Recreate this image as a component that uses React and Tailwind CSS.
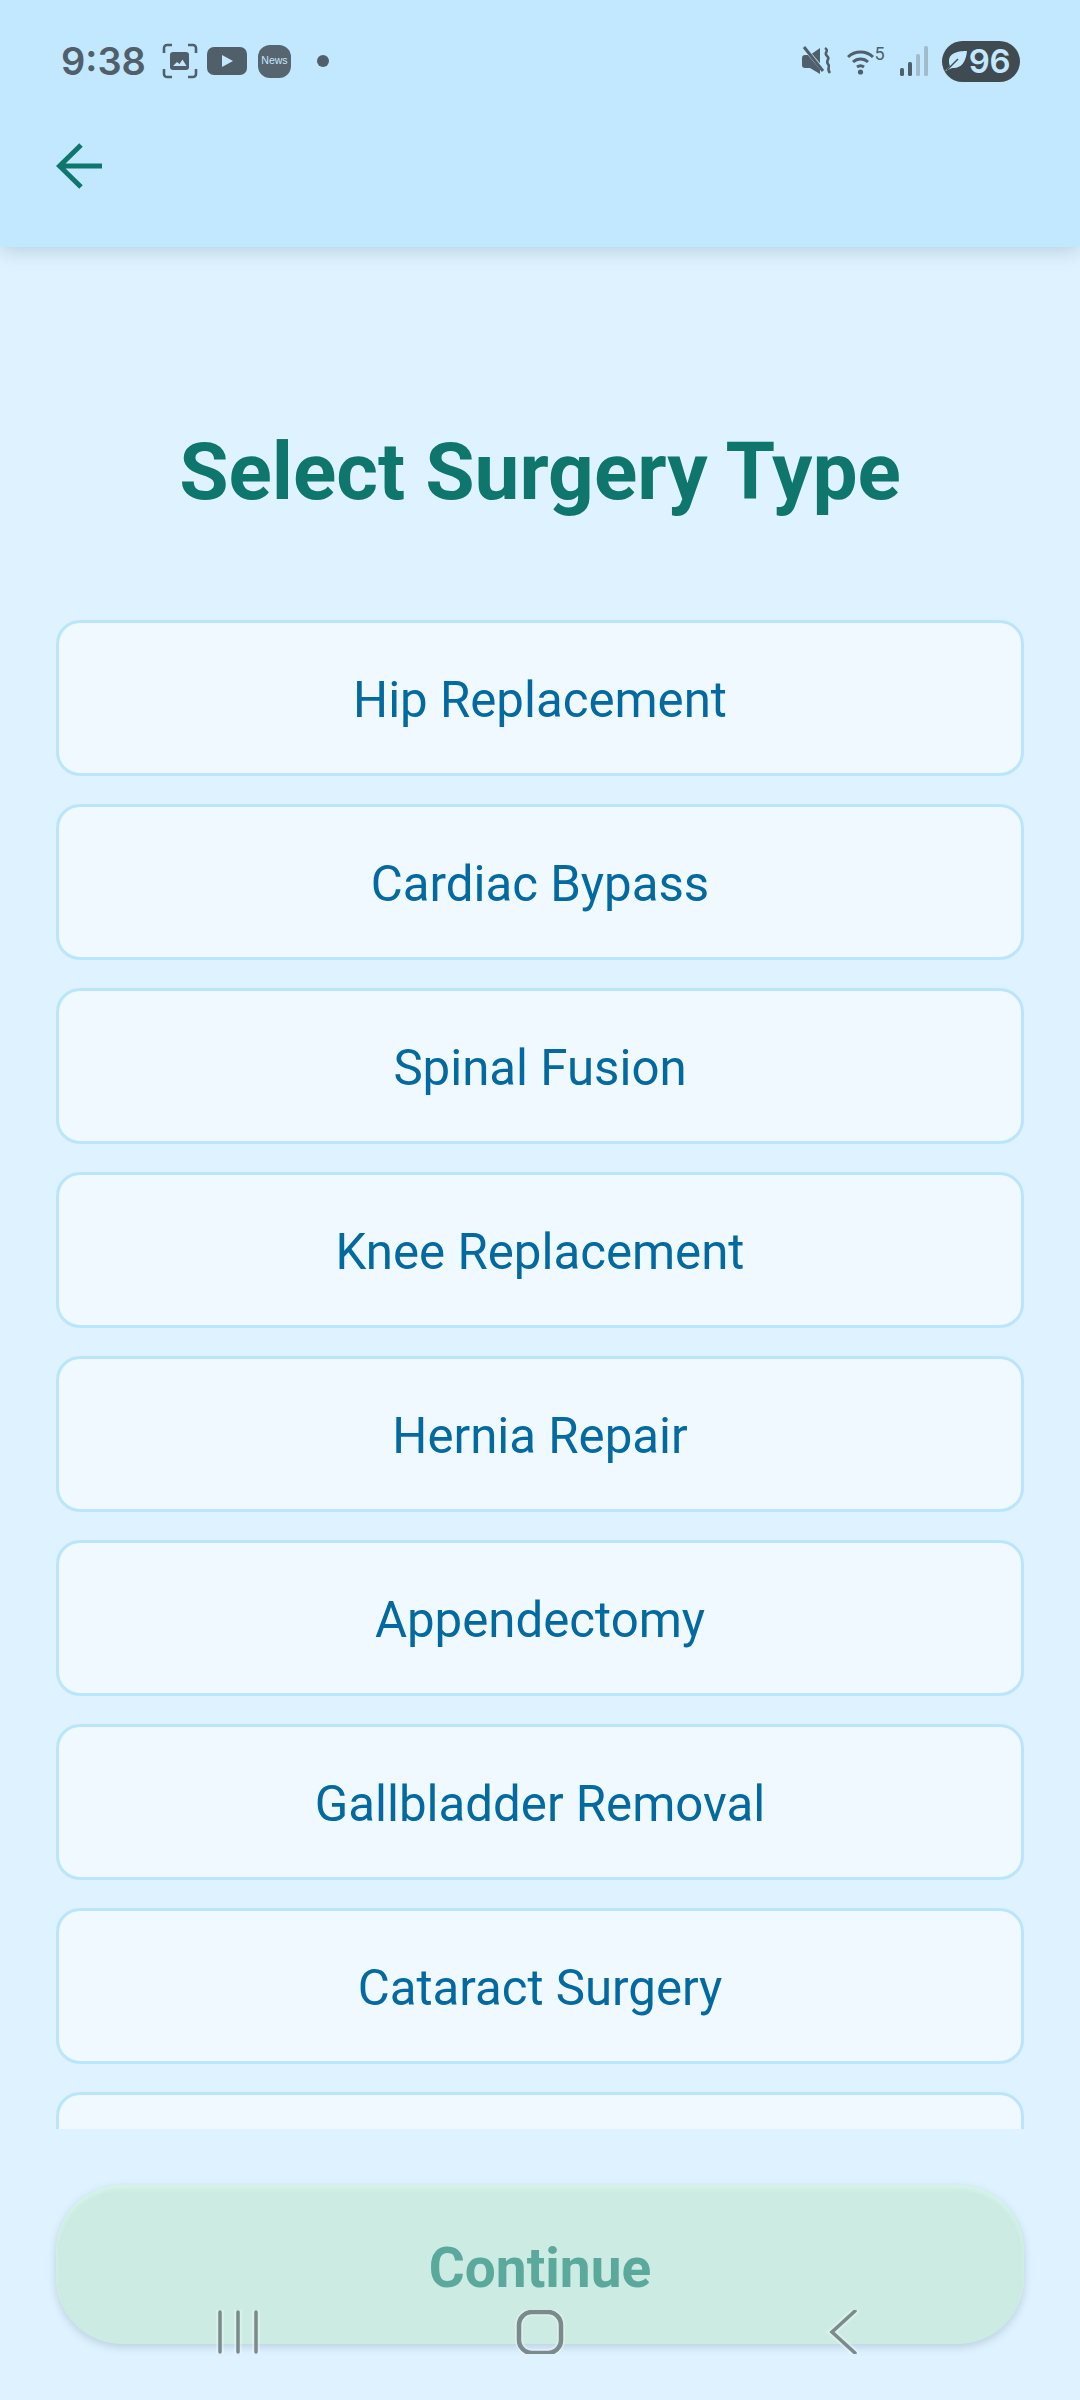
import React from 'react';

const surgeries = [
  'Hip Replacement',
  'Cardiac Bypass',
  'Spinal Fusion',
  'Knee Replacement',
  'Hernia Repair',
  'Appendectomy',
  'Gallbladder Removal',
  'Cataract Surgery',
  '',
];

const StatusLeft = () => (
  <div className="flex items-center">
    <span className="text-[38px] leading-none font-semibold text-[#505f69] w-[101px] font-['Inter',sans-serif]">9:38</span>
    <svg width="36" height="36" viewBox="0 0 36 36" fill="none">
      <path d="M10 2H5a3 3 0 0 0-3 3v5M26 2h5a3 3 0 0 1 3 3v5M10 34H5a3 3 0 0 1-3-3v-5M26 34h5a3 3 0 0 0 3-3v-5" stroke="#505f69" strokeWidth="2.6" />
      <rect x="8" y="9" width="19" height="18" rx="3" fill="#505f69" />
      <path d="M11 23l4-4 2.5 2 3-4.5 4 6.5z" fill="#c2e8ff" />
    </svg>
    <svg width="40" height="28" viewBox="0 0 40 28" className="ml-[9px]">
      <rect width="40" height="28" rx="7" fill="#505f69" />
      <path d="M15 8L26 14 15 20z" fill="#c2e8ff" />
    </svg>
    <div className="ml-[11px] w-[33px] h-[33px] rounded-[12px] bg-[#56656f] flex items-center justify-center text-[10.5px] font-['Liberation_Sans',sans-serif] text-[#c2e8ff]">News</div>
    <div className="ml-[26px] w-[12px] h-[12px] rounded-full bg-[#505f69]"></div>
  </div>
);

const StatusRight = () => (
  <div className="flex items-center">
    <svg width="30" height="30" viewBox="0 0 30 30" fill="#505f69">
      <path d="M0 12a3 3 0 0 1 3-3h5l10-7v26l-10-6H3a3 3 0 0 1-3-3z" />
      <path d="M1 0l20 24" stroke="#c2e8ff" strokeWidth="4" />
      <path d="M2 1l19 24" stroke="#505f69" strokeWidth="3" />
      <path d="M23 2c5 3-2 5 2 8s-2 5 1 8-2 4 2 9" fill="none" stroke="#505f69" strokeWidth="2.6" />
    </svg>
    <svg width="38" height="36" viewBox="0 -4 38 36" fill="none" className="ml-[15px]">
      <path d="M1 10a18 18 0 0 1 25 0M6 15a11 11 0 0 1 15 0M10 20a6 6 0 0 1 7 0" stroke="#505f69" strokeWidth="3" />
      <circle cx="13.5" cy="25" r="2.6" fill="#505f69" />
      <text x="27.5" y="13" fontSize="18" fill="#505f69" fontFamily="Roboto, sans-serif">5</text>
    </svg>
    <svg width="28" height="30" viewBox="0 0 28 30" className="ml-[15px]">
      <rect x="0" y="22" width="4" height="8" rx="1.5" fill="#505f69" />
      <rect x="8" y="16" width="4" height="14" rx="1.5" fill="#505f69" />
      <rect x="16" y="8" width="4" height="22" rx="1.5" fill="#a3bccb" />
      <rect x="24" y="0" width="4" height="30" rx="1.5" fill="#a3bccb" />
    </svg>
    <div className="ml-[14px] w-[78px] h-[41px] rounded-full bg-[#3f4a51] flex items-center justify-end pr-[10px]">
      <svg width="24" height="24" viewBox="0 0 24 24" className="mr-[1px]">
        <path d="M1 22c3-1 5-2 7-3 9 1 14-6 15-17-7 0-18 1-18 10 0 2 0 3 1 5z" fill="#c2e8ff" />
        <path d="M3 21l11-11" stroke="#3f4a51" strokeWidth="1.5" />
      </svg>
      <span className="text-[33px] leading-none font-semibold text-[#c2e8ff] font-['Inter',sans-serif] tracking-[-0.5px]">96</span>
    </div>
  </div>
);

const App = () => {
  return (
    <div className="relative w-[1080px] h-[2400px] overflow-hidden bg-[#dff2ff] font-['Roboto',sans-serif] flex flex-col">
      <header className="h-[247px] bg-[#c2e8ff] shadow-[0_4px_18px_rgba(60,90,110,0.22)] px-[56px] pt-[43px] shrink-0">
        <div className="flex items-center justify-between pl-[5px] pr-[4px] h-[36px]">
          <StatusLeft />
          <StatusRight />
        </div>
        <svg width="46" height="46" viewBox="0 0 46 46" fill="none" className="mt-[64px]">
          <path d="M46 23H3M25 2L3.5 23 25 44" stroke="#0f766e" strokeWidth="5" />
        </svg>
      </header>

      <h1 className="mt-[183px] text-center text-[80.2px] leading-[84px] font-bold text-[#0f766e]">Select Surgery Type</h1>

      <div className="mt-[106px] mx-[56px] h-[1509px] overflow-hidden flex flex-col gap-[28px] shrink-0">
        {surgeries.map((name, i) => (
          <button
            key={i}
            className="h-[156px] shrink-0 rounded-[24px] border-[3px] border-[#bae6fd] bg-[#f0f9ff] text-center text-[49.2px] text-[#0369a1] pt-[6px]"
          >
            {name}
          </button>
        ))}
      </div>

      <button className="mt-[56px] mx-[56px] h-[159px] shrink-0 rounded-[66px] bg-[#cbebe3] shadow-[0_3px_8px_rgba(60,90,110,0.22),inset_0_4px_4px_rgba(215,245,232,0.9)] text-[55px] leading-none font-bold text-[#5ba89c] pt-[8px]">
        Continue
      </button>

      {/* android nav bar sits over the page */}
      <div className="absolute left-0 right-0 top-[2310px] h-[44px]">
        <svg width="1080" height="44" viewBox="0 0 1080 44" fill="none" strokeLinecap="round">
          <g stroke="#ffffff" strokeOpacity="0.3" strokeWidth="8">
            <path d="M220 2v40M238 2v40M256 2v40" />
            <rect x="519" y="2" width="42" height="41" rx="13" />
            <path d="M855 1L832 22l23 21" />
          </g>
          <g stroke="#7b8a8a" strokeWidth="3.5">
            <path d="M220 2v40M238 2v40M256 2v40" />
            <rect x="519" y="2" width="42" height="41" rx="13" strokeWidth="4.5" />
            <path d="M855 1L832 22l23 21" />
          </g>
        </svg>
      </div>
    </div>
  );
};

export default App;
